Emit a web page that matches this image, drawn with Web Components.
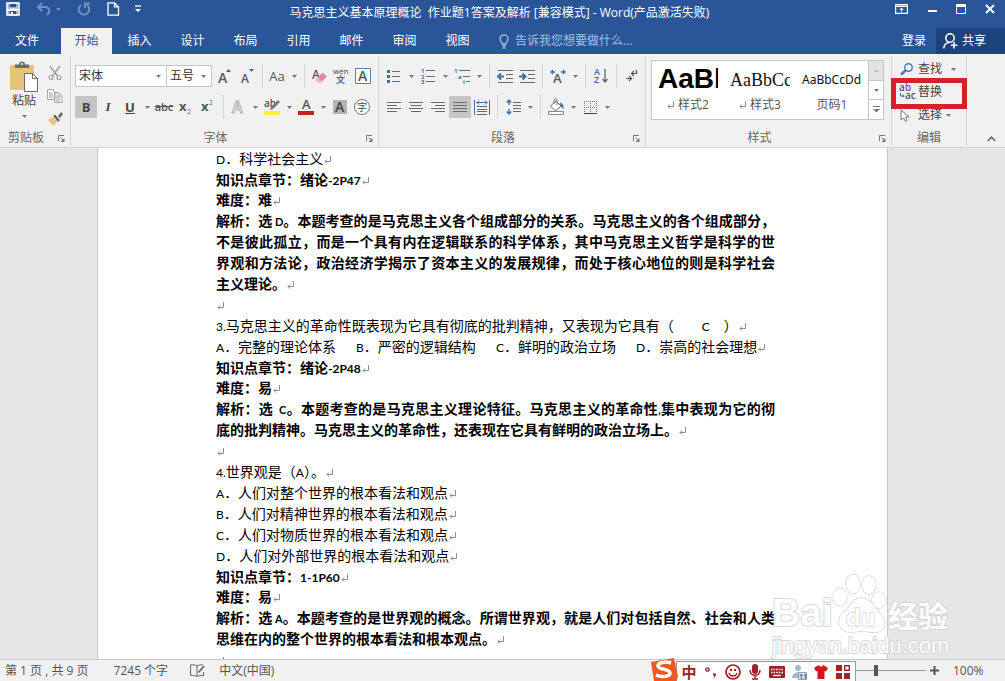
<!DOCTYPE html>
<html lang="zh-CN">
<head>
<meta charset="utf-8">
<title>马克思主义基本原理概论 作业题1答案及解析 - Word</title>
<style>
html, body { margin: 0; height: 100%; }
body { overflow: hidden; font: 12px/16px "Open Sans", "Noto Sans CJK SC", sans-serif; color: #444; }
</style>
</head>
<body>
<word-app></word-app>
<script>
const base = `*{box-sizing:border-box}
button,select,input{font:inherit;color:inherit;margin:0;padding:0;border:0;background:none}
a{color:inherit;text-decoration:none}`;
function define(name, css, html) {
  const tpl = document.createElement('template');
  tpl.innerHTML = `<style>${base}${css}</style>${html}`;
  customElements.define(name, class extends HTMLElement {
    connectedCallback() {
      if (!this.shadowRoot) this.attachShadow({ mode: 'open' }).append(tpl.content.cloneNode(true));
    }
  });
}

/* name: [width, height, svg body] */
const S = 'fill="none" stroke="currentColor"';
const lines = (rows) => rows.map(([x, y, w]) => `<path d="M${x} ${y}.5h${w}" stroke="#6a6a6a"/>`).join('');
const T = (x, y, s, size, extra = '') => `<text x="${x}" y="${y}" font-size="${size}" ${extra}>${s}</text>`;
const icons = {
  save: [14, 14, `<path d="M1 1h12v12H1z" ${S} stroke-width="1.6"/><path d="M3 1h8v5H3zM3 8h8v5H3z" fill="none" stroke="currentColor"/><path d="M1 6.500h12v2.500H1z" fill="currentColor"/><path d="M5 10h2v3H5z" fill="currentColor"/>`],
  undo: [16, 14, `<path d="M2 5h8a4 4 0 0 1 1 7.500" ${S} stroke-width="2"/><path d="M6 1L2 5l4 4" ${S} stroke-width="2"/>`],
  redo: [14, 14, `<path d="M4 3a5.300 5.300 0 1 0 6 0" ${S} stroke-width="2"/><path d="M8 6V1.500h5" ${S} stroke-width="2"/>`],
  page: [12, 14, `<path d="M1 .8h6.500l4 4V13.200H1zM7.500.8v4h4" ${S} stroke-width="1.300"/>`],
  more: [6, 8, `<path d="M0 1h6" ${S} stroke-width="1.300"/><path d="M0 4h6L3 7z" fill="currentColor"/>`],
  caret: [5, 3, `<path d="M0 0h5L2.500 3z" fill="currentColor"/>`],
  caretup: [5, 3, `<path d="M0 3h5L2.500 0z" fill="currentColor"/>`],
  expand: [7, 7, `<path d="M0 .5h7" ${S}/><path d="M0 3h7L3.500 6.500z" fill="currentColor"/>`],
  launch: [7, 7, `<path d="M.5 6V.5H6" ${S}/><path d="M2.500 2.500L6 6" ${S}/><path d="M6.500 3v4h-4z" fill="currentColor"/>`],
  collapse: [9, 6, `<path d="M.7 5L4.500 1.200 8.300 5" ${S} stroke-width="1.600"/>`],
  ribbonopt: [13, 10, `<path d="M.6.6h11.800v8.800H.6zM.6 2.400h11.800" ${S} stroke-width="1.200"/><path d="M6.500 8.500V4.200M4.600 6l1.900-2 1.900 2" ${S}/>`],
  min: [10, 10, `<path d="M1 7h9" ${S} stroke-width="2"/>`],
  max: [10, 10, `<path d="M.5.5h9v9h-9z" ${S}/><path d="M0 0h10v3H0z" fill="currentColor"/>`],
  close: [10, 10, `<path d="M1 1l8 8M9 1L1 9" ${S} stroke-width="2"/>`],
  bulb: [10, 15, `<path d="M3.300 10C3.300 8 1 7.500 1 4.800a4 4 0 0 1 8 0C9 7.500 6.700 8 6.700 10z" ${S} stroke-width="1.300"/><path d="M3.300 12h3.400M3.700 14h2.600" ${S} stroke-width="1.300"/>`],
  person: [15, 16, `<circle cx="7" cy="5" r="4.200" ${S} stroke-width="1.500"/><path d="M.8 15.500C1 12 3 9.700 6 9.400M11 9v6.500M7.800 12.300h6.500" ${S} stroke-width="1.500"/>`],
  paste: [28, 31, `<rect y="4" width="24" height="25" rx="1" fill="#e9c07c"/><path d="M5 7V3.500h4a3 3 0 0 1 6 0h4V7z" fill="#6b6b6b"/><circle cx="12" cy="3" r="1" fill="#fff"/><path d="M14.500 12.500h8l5 5v13h-13z" fill="#fff" stroke="#6b6b6b"/><path d="M22.500 12.500v5h5" fill="none" stroke="#6b6b6b"/>`],
  cut: [14, 14, `<path d="M2 0l7.500 10M12 0L4.500 10" stroke="#a0a0a0" fill="none" stroke-width="1.500"/><circle cx="3" cy="11.500" r="2" fill="none" stroke="#a0a0a0" stroke-width="1.200"/><circle cx="11" cy="11.500" r="2" fill="none" stroke="#a0a0a0" stroke-width="1.200"/>`],
  copy: [16, 14, `<path d="M.5.500h5l2.500 2.500v7.500H.5zM7.500 3.500h4l3.500 3v7H7.500z" fill="#f1f1f1" stroke="#a9a9a9"/><path d="M2 4h3M2 6h4M2 8h4M9 8h4M9 10h4M9 12h4M11 4v3h3" stroke="#a9a9a9" fill="none"/>`],
  brush: [15, 14, `<path d="M0 8l5-3 4 5-4 4C4 12 2 10 0 8z" fill="#e9c07c"/><path d="M5 4l2-1.500 5 5.500-2 2zM10 4l3-4 2 2-3 4z" fill="#6b6b6b"/>`],
  grow: [14, 15, T(0, 14, 'A', 14, 'font-weight="600" fill="#5a5a5a"') + `<path d="M8 3h5l-2.500-3z" fill="#44669c"/>`],
  shrink: [14, 15, T(1, 14, 'A', 12, 'font-weight="600" fill="#5a5a5a"') + `<path d="M9 0h5l-2.500 3z" fill="#44669c"/>`],
  erase: [15, 15, T(0, 10, 'A', 12, 'font-weight="600" fill="#5a5a5a"') + `<path d="M3 11L10.500 3.500 15 7.500 8 14.500z" fill="#e58a9d"/><path d="M3 11l2.500-2.500 4.500 4L8 14.500z" fill="#f3bcc6"/>`],
  phonetic: [16, 16, T(0, 6, 'wén', 8, 'fill="#444"') + T(3, 15, '文', 9, 'fill="#3f73a8" font-weight="700"')],
  abox: [16, 16, `<path d="M.5.5h15v15H.5z" fill="#fff" stroke="#5b82ab"/>` + T(3, 13, 'A', 14, 'font-weight="600" fill="#555"')],
  sub: [14, 14, T(0, 11, 'x', 13, 'font-weight="700" fill="#555"') + T(8, 14, '2', 7, 'fill="#3f73a8"')],
  sup: [14, 14, T(0, 11, 'x', 13, 'font-weight="700" fill="#555"') + T(8, 5, '2', 7, 'fill="#3f73a8"')],
  outline: [14, 15, T(1, 13, 'A', 16, 'font-weight="600" fill="#fff" stroke="#adadad"')],
  highlight: [16, 16, T(0, 8, 'ab', 10, 'font-weight="600" fill="#555"') + `<path d="M14 1l2 2-7 7-3 1 1-3z" fill="#777"/><path d="M0 12h16v4H0z" fill="#f7f330"/>`],
  color: [16, 16, T(4, 10, 'A', 13, 'font-weight="600" fill="#555"') + `<path d="M0 12h16v4H0z" fill="#c9211e"/>`],
  shade: [14, 14, `<path d="M0 0h14v14H0z" fill="#b3b3b3"/>` + T(2, 12, 'A', 14, 'font-weight="600" fill="#444"')],
  enclose: [16, 16, `<circle cx="8" cy="8" r="7.500" fill="#fff" stroke="#777"/>` + T(3, 12, '字', 10, 'fill="#444"')],
  bullets: [14, 15, `<path d="M0 1h3v3H0zM0 6h3v3H0zM0 11h3v3H0z" fill="#3f6fa5"/>` + lines([[5, 2, 8], [5, 7, 8], [5, 12, 8]])],
  numbers: [14, 16, ['1', '2', '3'].map((n, i) => T(0, 5 + 5.500 * i, n, 6, 'fill="#3f6fa5" font-weight="700"')).join('') + lines([[5, 2, 9], [5, 8, 9], [5, 13, 9]])],
  multi: [17, 16, T(0, 5, '1', 6, 'fill="#3f6fa5" font-weight="700"') + T(4, 11, 'a', 6, 'fill="#3f6fa5" font-weight="700"') + T(9, 16, 'i', 6, 'fill="#3f6fa5" font-weight="700"') + lines([[5, 2, 11], [9, 8, 7], [12, 13, 4]])],
  outdent: [16, 13, lines([[1, 0, 15], [9, 4, 7], [9, 8, 7], [1, 12, 15]]) + `<path d="M7 6.500H2M4 3.500l-3 3 3 3" fill="none" stroke="#3f6fa5" stroke-width="2"/>`],
  indent: [16, 13, lines([[1, 0, 15], [9, 4, 7], [9, 8, 7], [1, 12, 15]]) + `<path d="M0 6.500h5M3.500 3.500l3 3-3 3" fill="none" stroke="#3f6fa5" stroke-width="2"/>`],
  asian: [16, 14, T(3, 14, 'A', 13, 'font-weight="600" fill="#5a5a5a"') + `<path d="M5 3H1M3 1L1 3l2 2M11 3h4M13 1l2 2-2 2" fill="none" stroke="#3f6fa5" stroke-width="1.300"/>`],
  sort: [14, 16, T(0, 7, 'A', 9, 'font-weight="600" fill="#3f6fa5"') + T(0, 15, 'Z', 9, 'font-weight="600" fill="#8a4a9e"') + `<path d="M11 1v12M8.500 11l2.500 3 2.500-3" fill="none" stroke="#666" stroke-width="1.300"/>`],
  marks: [12, 12, `<path d="M10.500 0v3.500H6M8 1L5.500 3.500 8 6M0 8.500h5M3 6l2.500 2.500L3 11" fill="none" stroke="#555" stroke-width="1.200"/>`],
  left: [14, 12, lines([[0, 1, 14], [0, 4, 10], [0, 7, 14], [0, 10, 10]])],
  center: [14, 12, lines([[0, 1, 14], [2, 4, 10], [0, 7, 14], [2, 10, 10]])],
  right: [14, 12, lines([[0, 1, 14], [4, 4, 10], [0, 7, 14], [4, 10, 10]])],
  justify: [14, 12, lines([[0, 1, 14], [0, 4, 14], [0, 7, 14], [0, 10, 14]])],
  distribute: [16, 15, `<path d="M.5 0v15M15.500 0v15" stroke="#3f6fa5"/><path d="M2.500 2.500h11M5 .5l-2 2 2 2M11 .5l2 2-2 2" fill="none" stroke="#3f6fa5"/>` + lines([[3, 6, 10], [3, 9, 10], [3, 11, 10], [3, 14, 10]])],
  spacing: [15, 16, `<path d="M3 1v5M.8 3.500L3 1l2.200 2.500M3 15v-5M.8 12.500L3 15l2.200-2.500" fill="none" stroke="#3f6fa5" stroke-width="1.400"/>` + lines([[7, 3, 8], [7, 6, 8], [7, 9, 8], [7, 12, 8]])],
  bucket: [17, 16, `<path d="M2.500 7L8 2l5 5-5.500 5z" fill="#fff" stroke="#666"/><path d="M6 5V1.500a1.500 1.500 0 0 1 3 0V6" fill="none" stroke="#8a6a4a"/><path d="M12 3.500c3 1 4 3 3.500 7-1-1-1.500-2.500-3-3.500z" fill="#3f6fa5"/><path d="M.5 12.500h15v3H.5z" fill="#fff" stroke="#888"/>`],
  borders: [13, 13, `<path d="M.5 0v12M6.500 0v12M12.500 0v12M0 .5h13M0 6.500h13" stroke="#777" stroke-dasharray="1 1"/><path d="M0 12.500h13" stroke="#444"/>`],
  find: [13, 12, `<circle cx="8.500" cy="4.500" r="3.700" fill="#fff" stroke="#4679b2" stroke-width="1.500"/><path d="M5.500 7.500L1 11.500" stroke="#4679b2" stroke-width="2.400"/>`],
  replace: [17, 16, T(-1, 7, 'a', 10, 'fill="#555" font-weight="600"') + T(5, 7, 'b', 10, 'fill="#8a4a9e" font-weight="600"') + T(5, 15, 'ac', 10, 'fill="#555" font-weight="600"') + `<path d="M.5 9v3h4M2.500 10.500L4 12l-1.500 1.500" fill="none" stroke="#3f6fa5"/>`],
  select: [10, 13, `<path d="M1 1v10l2.500-2 2 3.500 1.500-1L5.500 8H9z" fill="#fff" stroke="#777"/>`],
  proof: [15, 13, `<path d="M7 12.500V2C5.500.8 3 .7.600.8v10.500c2.400 0 4.900.2 6.400 1.200zM7 2C8 1 10 .8 13 .8M7 12.500c1-.8 3-1 6.500-1V8" fill="none" stroke="#666"/><path d="M8.500 8.500L14 2" stroke="#666" stroke-width="1.800"/>`],
  enter: [7, 8, `<path d="M6.500 0v5.500H1M3 3.500L1 5.500l2 2" fill="none" stroke="#8c8c8c"/>`],
  plus: [9, 9, `<path d="M0 4.500h9M4.500 0v9" stroke="#555" stroke-width="2"/>`],
  sogou: [28, 23, `<path d="M1 4l23-4 4 19-2 4H4z" fill="#ec5a24"/><path d="M21 5C15 3 8 4.500 8 8c0 4 12 2.500 12 7 0 4-9 4.500-14 2" fill="none" stroke="#fff" stroke-width="3.600"/>`],
  smile: [16, 16, `<circle cx="8" cy="8" r="7" fill="none" stroke="#a32024" stroke-width="1.700"/><path d="M4 9c1 4 7 4 8 0" fill="none" stroke="#a32024" stroke-width="1.300"/><path d="M5 5h2v2H5zM9 5h2v2H9z" fill="#a32024"/>`],
  comma: [12, 12, `<circle cx="2.500" cy="3.500" r="1.700" fill="none" stroke="#a32024" stroke-width="1.300"/><path d="M8 7.500a1.700 1.700 0 1 1 2.500 2.500L8 13c1-1.500 1.300-2.500.8-3z" fill="#a32024"/>`],
  mic: [12, 16, `<rect x="3" width="6" height="10" rx="3" fill="#a32024"/><path d="M1 6c0 7 10 7 10 0M6 11v4M3 15h6" fill="none" stroke="#a32024" stroke-width="1.500"/>`],
  keys: [16, 12, `<rect width="16" height="12" rx="1" fill="#a32024"/><path d="M2 3.500h12M2 6.500h12" stroke="#fff" stroke-width="1.500" stroke-dasharray="1.500 1.100"/><path d="M4 9.500h8" stroke="#fff" stroke-width="1.300"/>`],
  user: [16, 16, `<circle cx="7" cy="4" r="3" fill="#a9b8cd"/><path d="M1 14c0-7 10-7 12-3v3z" fill="#a9b8cd"/><path d="M7.500 8.500h8v7h-8z" fill="#dde6f2" stroke="#8ca0bf"/>` + T(8, 15, '11', 7, 'fill="#52698f"')],
  shirt: [14, 14, `<path d="M0 3l4.500-3c1 2 4 2 5 0L14 3l-2 3.500-1.500-.5v8h-7V6L2 6.500z" fill="#d4151b"/>`],
  grid: [14, 14, `<path d="M0 0h6v6H0zM0 8h6v6H0zM8 8h6v6H8z" fill="#a32024"/><path d="M8.700.7h4.600v4.600H8.700z" fill="none" stroke="#a32024" stroke-width="1.400"/>`],
};
customElements.define('ui-icon', class extends HTMLElement {
  connectedCallback() {
    if (this.shadowRoot) return;
    const [w, h, body] = icons[this.getAttribute('name')];
    this.attachShadow({ mode: 'open' }).innerHTML =
      `<style>:host{display:inline-flex;flex:none}svg{display:block;overflow:visible;font-family:"Open Sans","Noto Sans CJK SC",sans-serif}</style>
       <svg width="${w}" height="${h}" viewBox="0 0 ${w} ${h}" aria-hidden="true">${body}</svg>`;
  }
});

/* Ribbon button: optional icon, optional slotted glyph, optional drop-down caret */
customElements.define('tool-button', class extends HTMLElement {
  connectedCallback() {
    if (this.shadowRoot) return;
    const icon = this.getAttribute('icon');
    this.attachShadow({ mode: 'open' }).innerHTML = `<style>${base}
      :host{display:flex;flex:none;height:22px}
      button{display:flex;align-items:center;height:22px}
      .face{width:22px;display:flex;justify-content:center;white-space:nowrap}
      .drop{width:12px;display:flex;justify-content:center;color:#777}
      :host([pressed]) button{background:#c5c5c5}
      :host([pressed]) .face{height:22px;align-items:center}
    </style><button type="button" aria-label="${this.getAttribute('label')}"><span class="face">${icon ? `<ui-icon name="${icon}"></ui-icon>` : '<slot></slot>'}</span>${this.hasAttribute('drop') ? '<span class="drop"><ui-icon name="caret"></ui-icon></span>' : ''}</button>`;
  }
});

define('tool-sep', `:host{display:block;flex:none;width:var(--sep,8px);height:24px}
  i{display:block;width:1px;height:24px;margin:0 auto;background:#d6d6d6}`, `<i></i>`);

customElements.define('ribbon-group', class extends HTMLElement {
  connectedCallback() {
    if (this.shadowRoot) return;
    this.attachShadow({ mode: 'open' }).innerHTML = `<style>${base}
      :host{display:flex;flex-direction:column;border-right:1px solid #d6d6d6;height:90px}
      .body{flex:1;min-height:0}
      footer{display:flex;align-items:center;height:16px;color:#666}
      footer span{flex:1;text-align:center}
      footer button{width:18px;height:16px;display:flex;align-items:center;justify-content:center;color:#777}
    </style><div class="body"><slot></slot></div>
    <footer><span>${this.getAttribute('label')}</span>${this.hasAttribute('launcher') ? '<button type="button" aria-label="更多选项"><ui-icon name="launch"></ui-icon></button>' : ''}</footer>`;
  }
});

define('title-bar', `:host{display:grid;grid-template-columns:1fr auto 1fr;height:28px;color:#fff}
  .quick{display:flex;align-items:flex-start;gap:16px;padding:2px 6px}
  .quick button{display:flex;align-items:center;gap:4px;height:14px}
  .dim{opacity:.35}
  h1{margin:0;font-size:12px;line-height:26px;font-weight:400;white-space:pre;padding-right:6px}
  .win{display:flex;justify-content:flex-end;gap:19px;padding:4px 10px}
  .win button{display:flex;height:10px}`,
`<div class="quick"><button aria-label="保存"><ui-icon name="save"></ui-icon></button>
<button class="dim" aria-label="撤消"><ui-icon name="undo"></ui-icon><ui-icon name="caret"></ui-icon></button>
<button class="dim" aria-label="重复"><ui-icon name="redo"></ui-icon></button>
<button aria-label="新建"><ui-icon name="page"></ui-icon></button>
<button aria-label="自定义快速访问工具栏"><ui-icon name="more"></ui-icon></button></div>
<h1>马克思主义基本原理概论  作业题1答案及解析 [兼容模式] - Word(产品激活失败)</h1>
<div class="win"><button aria-label="功能区显示选项"><ui-icon name="ribbonopt"></ui-icon></button><button aria-label="最小化"><ui-icon name="min"></ui-icon></button><button aria-label="最大化"><ui-icon name="max"></ui-icon></button><button aria-label="关闭"><ui-icon name="close"></ui-icon></button></div>`);

define('ribbon-tabs', `:host{display:flex;height:26px;color:#fff;line-height:24px;padding-left:1px}
  nav{display:flex}
  a{width:53px;text-align:center;padding-top:1px}
  .file{width:52px;margin-right:8px}
  .on{background:#f1f1f1;color:#2b579a;width:51px;margin-right:1px;margin-left:0}
  .tell{display:flex;align-items:center;gap:6px;margin-left:15px;color:#a9c0e2}
  input{width:130px;height:24px}
  input::placeholder{color:#a9c0e2;opacity:1}
  .sign{width:auto;margin-left:auto;margin-right:10px}
  .share{display:flex;align-items:center;gap:4px;width:69px;padding-left:7px;background:#1c437c}`,
`<nav><a class="file" href="#">文件</a><a class="on" href="#">开始</a><a href="#">插入</a><a href="#">设计</a><a href="#">布局</a><a href="#">引用</a><a href="#">邮件</a><a href="#">审阅</a><a href="#">视图</a></nav>
<label class="tell"><ui-icon name="bulb"></ui-icon><input type="text" aria-label="告诉我您想要做什么" placeholder="告诉我您想要做什么..."></label>
<a class="sign" href="#">登录</a><button class="share"><ui-icon name="person"></ui-icon>共享</button>`);

define('clipboard-tools', `:host{display:flex;padding-top:5px}
  .paste{display:flex;flex-direction:column;align-items:center;width:46px;height:60px;line-height:18px;padding-left:2px}
  .paste ui-icon:last-child{margin-top:5px;color:#777}
  .side{display:flex;flex-direction:column}
  .side button{width:18px;height:23px;display:flex;align-items:center;justify-content:center}`,
`<button class="paste"><ui-icon name="paste"></ui-icon>粘贴<ui-icon name="caret"></ui-icon></button>
<div class="side"><button aria-label="剪切"><ui-icon name="cut"></ui-icon></button><button aria-label="复制"><ui-icon name="copy"></ui-icon></button><button aria-label="格式刷"><ui-icon name="brush"></ui-icon></button></div>`);

define('font-tools', `:host{display:flex;flex-direction:column;gap:9px;padding:9px 0 0 4px}
  .row{display:flex;align-items:center;height:22px}
  label{display:flex;position:relative;height:22px;background:#fff;border:1px solid #c6c6c6}
  label ui-icon{position:absolute;right:5px;top:9px;color:#777;pointer-events:none}
  select{appearance:none;width:100%;padding:0 3px;color:#333}
  .name{width:92px;margin-right:-1px}.size{width:46px;margin-right:2px}
  b,i,u{font-size:13px;line-height:20px}
  u,b{font-weight:700}i{font-family:"Liberation Serif",serif;font-weight:700}
  s{font-size:11px;font-weight:600;color:#555}.aa{color:#555;font-size:13px}`,
`<div class="row"><label class="name"><select aria-label="字体"><option>宋体</option></select><ui-icon name="caret"></ui-icon></label>
<label class="size"><select aria-label="字号"><option>五号</option></select><ui-icon name="caret"></ui-icon></label>
<tool-button icon="grow" label="增大字号"></tool-button><tool-button icon="shrink" label="减小字号"></tool-button><tool-sep></tool-sep>
<tool-button drop label="更改大小写"><span class="aa">Aa</span></tool-button><tool-sep></tool-sep>
<tool-button icon="erase" label="清除格式"></tool-button><tool-button icon="phonetic" label="拼音指南"></tool-button><tool-button icon="abox" label="字符边框"></tool-button></div>
<div class="row"><tool-button pressed label="加粗"><b>B</b></tool-button><tool-button label="倾斜"><i>I</i></tool-button><tool-button drop label="下划线"><u>U</u></tool-button><tool-button label="删除线"><s>abc</s></tool-button><tool-button icon="sub" label="下标"></tool-button><tool-button icon="sup" label="上标"></tool-button><tool-sep></tool-sep>
<tool-button drop icon="outline" label="文本效果"></tool-button><tool-button drop icon="highlight" label="突出显示"></tool-button><tool-button drop icon="color" label="字体颜色"></tool-button><tool-button icon="shade" label="字符底纹"></tool-button><tool-button icon="enclose" label="带圈字符"></tool-button></div>`);

define('paragraph-tools', `:host{display:flex;flex-direction:column;gap:9px;padding:9px 0 0 4px;--sep:9px}
  .row{display:flex;align-items:center;height:22px}`,
`<div class="row"><tool-button drop icon="bullets" label="项目符号"></tool-button><tool-button drop icon="numbers" label="编号"></tool-button><tool-button drop icon="multi" label="多级列表"></tool-button><tool-sep></tool-sep><tool-button icon="outdent" label="减少缩进量"></tool-button><tool-button icon="indent" label="增加缩进量"></tool-button><tool-sep></tool-sep><tool-button drop icon="asian" label="中文版式"></tool-button><tool-sep></tool-sep><tool-button icon="sort" label="排序"></tool-button><tool-sep></tool-sep><tool-button icon="marks" label="显示编辑标记"></tool-button></div>
<div class="row"><tool-button icon="left" label="左对齐"></tool-button><tool-button icon="center" label="居中"></tool-button><tool-button icon="right" label="右对齐"></tool-button><tool-button pressed icon="justify" label="两端对齐"></tool-button><tool-button icon="distribute" label="分散对齐"></tool-button><tool-sep></tool-sep><tool-button drop icon="spacing" label="行距"></tool-button><tool-sep></tool-sep><tool-button drop icon="bucket" label="底纹"></tool-button><tool-button drop icon="borders" label="边框"></tool-button></div>`);

define('style-gallery', `:host{display:flex;margin:4px 7px 0 5px;height:60px;background:#fff;border:1px solid #c6c6c6}
  .items{display:flex;flex:1;min-width:0}
  .item{flex:1;min-width:0;padding:0 6px;display:flex;flex-direction:column;align-items:stretch;color:#555}
  .item span{display:block;height:36px;line-height:38px;overflow:hidden;white-space:nowrap;color:#111;text-align:left}
  .item div{display:flex;align-items:center;justify-content:center;gap:4px;line-height:16px}
  .two span{font:700 28px/36px "Liberation Sans",sans-serif;color:#000}
  .three span{font:18px/38px "Liberation Serif",serif}
  .code span{font-family:"Noto Sans",sans-serif}
  .scroll{width:15px;display:flex;flex-direction:column;border-left:1px solid #c6c6c6;color:#777}
  .scroll button{flex:1;display:flex;align-items:center;justify-content:center}
  .scroll button+button{border-top:1px solid #c6c6c6}
  .scroll .off{background:#e3e3e3;color:#bbb}`,
`<div class="items"><button class="item two"><span>AaBb</span><div><ui-icon name="enter"></ui-icon>样式2</div></button>
<button class="item three"><span>AaBbCc</span><div><ui-icon name="enter"></ui-icon>样式3</div></button>
<button class="item code"><span>AaBbCcDd</span><div>页码1</div></button></div>
<div class="scroll"><button class="off" aria-label="上一行"><ui-icon name="caretup"></ui-icon></button><button aria-label="下一行"><ui-icon name="caret"></ui-icon></button><button aria-label="其他"><ui-icon name="expand"></ui-icon></button></div>`);

define('edit-tools', `:host{display:flex;flex-direction:column;gap:1px;padding-top:2px;position:relative}
  button{display:flex;align-items:center;height:22px;padding-left:7px}
  .pic{width:19px;display:flex;padding-left:1px}
  .drop{margin-left:9px;color:#777}.near{margin-left:4px}
  .mark{position:absolute;inset:22px 0 auto 0;height:31px;margin:0 -1px;border:5px solid #d8202a;pointer-events:none}`,
`<button><span class="pic"><ui-icon name="find"></ui-icon></span>查找<ui-icon class="drop" name="caret"></ui-icon></button>
<button><span class="pic"><ui-icon name="replace"></ui-icon></span>替换</button>
<button><span class="pic"><ui-icon name="select"></ui-icon></span>选择<ui-icon class="drop near" name="caret"></ui-icon></button>
<div class="mark"></div>`);

define('ribbon-bar', `:host{display:flex;height:94px;background:#f1f1f1;border-bottom:1px solid #d2d2d2;padding-top:2px}
  .clip{width:71px}.font{width:308px}.para{width:267px}.styles{flex:1;min-width:180px}.edit{width:75px}
  .tail{width:38px;display:flex;align-items:flex-end;justify-content:center;padding:0 0 5px 10px;color:#666}`,
`<ribbon-group class="clip" label="剪贴板" launcher><clipboard-tools></clipboard-tools></ribbon-group>
<ribbon-group class="font" label="字体" launcher><font-tools></font-tools></ribbon-group>
<ribbon-group class="para" label="段落" launcher><paragraph-tools></paragraph-tools></ribbon-group>
<ribbon-group class="styles" label="样式" launcher><style-gallery></style-gallery></ribbon-group>
<ribbon-group class="edit" label="编辑"><edit-tools></edit-tools></ribbon-group>
<button class="tail" aria-label="折叠功能区"><ui-icon name="collapse"></ui-icon></button>`);

/* One paragraph of the document with its end-of-paragraph mark */
define('doc-p', `:host{display:block;line-height:21px;text-align:justify}
  :host([strong]){font-weight:700}
  :host([chapter]){font-weight:700;line-height:20px}
  ui-icon{margin-left:1px}`,
`<slot></slot><ui-icon name="enter"></ui-icon>`);

define('word-document', `:host{display:block;flex:1;min-height:0;overflow:hidden;background:#e6e6e6;padding-right:20px}
  article{width:791px;max-width:100%;margin:0 auto;height:100%;overflow:hidden;background:#fff;border:solid #c8c8c8;border-width:0 1px;padding:0 112px 0 118px;font:14px/21px "Noto Sans CJK SC",sans-serif;color:#000}
  b{font-family:Lato,sans-serif;font-size:12px;font-weight:inherit;line-height:14px}
  doc-p[strong] b{font-size:11px}
  .opt{display:inline-block;width:140px}
  .opt:last-of-type{width:auto}`,
`<article>
<doc-p><b>D</b>．科学社会主义</doc-p>
<doc-p chapter>知识点章节：绪论<b>-2P47</b></doc-p>
<doc-p strong>难度：难</doc-p>
<doc-p strong>解析：选<b> D</b>。本题考查的是马克思主义各个组成部分的关系。马克思主义的各个组成部分，不是彼此孤立，而是一个具有内在逻辑联系的科学体系，其中马克思主义哲学是科学的世界观和方法论，政治经济学揭示了资本主义的发展规律，而处于核心地位的则是科学社会主义理论。</doc-p>
<doc-p></doc-p>
<doc-p><b>3.</b>马克思主义的革命性既表现为它具有彻底的批判精神，又表现为它具有（&emsp;&emsp;<b>C</b>&emsp;）</doc-p>
<doc-p><span class="opt"><b>A</b>．完整的理论体系</span><span class="opt"><b>B</b>．严密的逻辑结构</span><span class="opt"><b>C</b>．鲜明的政治立场</span><span class="opt"><b>D</b>．崇高的社会理想</span></doc-p>
<doc-p chapter>知识点章节：绪论<b>-2P48</b></doc-p>
<doc-p strong>难度：易</doc-p>
<doc-p strong>解析：选<b>&nbsp; C</b>。本题考查的是马克思主义理论特征。马克思主义的革命性<b>,</b>集中表现为它的彻底的批判精神。马克思主义的革命性，还表现在它具有鲜明的政治立场上。</doc-p>
<doc-p></doc-p>
<doc-p><b>4.</b>世界观是（<b>A</b>）。</doc-p>
<doc-p><b>A</b>．人们对整个世界的根本看法和观点</doc-p>
<doc-p><b>B</b>．人们对精神世界的根本看法和观点</doc-p>
<doc-p><b>C</b>．人们对物质世界的根本看法和观点</doc-p>
<doc-p><b>D</b>．人们对外部世界的根本看法和观点</doc-p>
<doc-p chapter>知识点章节：<b>1-1P60</b></doc-p>
<doc-p strong>难度：易</doc-p>
<doc-p strong>解析：选<b> A</b>。本题考查的是世界观的概念。所谓世界观，就是人们对包括自然、社会和人类思维在内的整个世界的根本看法和根本观点。</doc-p>
<doc-p></doc-p>
</article>`);

define('status-bar', `:host{display:flex;align-items:center;height:22px;flex:none;background:#f1f1f1;border-top:1px solid #c8c8c8;padding:0 20px 0 5px;color:#555;white-space:pre}
  .words{margin-left:25px}.proof{margin:0 14px 0 22px;display:flex}
  .zoom{display:flex;align-items:center;margin-left:auto}
  input{appearance:none;width:100px;height:14px;background:linear-gradient(#999,#999) center/100% 1px no-repeat}
  input::-webkit-slider-thumb{appearance:none;width:4px;height:11px;background:#555}
  .zoom button{display:flex;margin:0 14px 0 4px}
  output{min-width:32px}`,
`<span>第 1 页 , 共 9 页</span><span class="words">7245 个字</span><button class="proof" aria-label="校对"><ui-icon name="proof"></ui-icon></button><span>中文(中国)</span>
<div class="zoom"><input type="range" min="0" max="100" value="50" aria-label="显示比例"><button aria-label="放大"><ui-icon name="plus"></ui-icon></button><output>100%</output></div>`);

define('ime-bar', `:host{position:absolute;right:149px;bottom:0;display:flex;align-items:flex-end}
  .logo{margin-right:-2px;position:relative}
  .keys{display:flex;height:20px;background:#fff;border:1px solid #999;border-bottom:0;padding:0 1px}
  .keys button{width:22px;display:flex;align-items:center;justify-content:center;color:#a32024;font-weight:700;font-size:15px}`,
`<ui-icon class="logo" name="sogou"></ui-icon><div class="keys"><button>中</button><button aria-label="标点"><ui-icon name="comma"></ui-icon></button><button aria-label="表情"><ui-icon name="smile"></ui-icon></button><button aria-label="语音"><ui-icon name="mic"></ui-icon></button><button aria-label="软键盘"><ui-icon name="keys"></ui-icon></button><button aria-label="账户"><ui-icon name="user"></ui-icon></button><button aria-label="皮肤"><ui-icon name="shirt"></ui-icon></button><button aria-label="工具箱"><ui-icon name="grid"></ui-icon></button></div>`);

define('site-mark', `:host{position:absolute;right:55px;bottom:22px;width:178px;pointer-events:none;color:#fff;
    -webkit-text-stroke:2px #d6d6d6;paint-order:stroke fill;opacity:.9}
  .top{display:flex;align-items:flex-end;height:60px}
  .bai{font:700 39px/40px "Liberation Sans",sans-serif;width:62px}
  .paw{width:54px;height:60px;overflow:visible;flex:none}
  .jy{font:700 30px/38px "Noto Sans CJK SC",sans-serif}
  .url{font:22px/26px "Liberation Sans",sans-serif}`,
`<div class="top"><span class="bai">Bai</span>
<svg class="paw" viewBox="0 0 54 60" fill="#fff" stroke="#d4d4d4" stroke-width="1.500"><ellipse cx="19" cy="11" rx="7" ry="9.500"/><ellipse cx="35" cy="12" rx="7" ry="9"/><ellipse cx="6" cy="24" rx="7" ry="9"/><ellipse cx="45" cy="27" rx="7" ry="8"/><path d="M27 25c-9 0-10 9-17 14-8 6-6 19 5 20 7 0 9-1 14-1s8 2 14 1c9-1 10-12 3-19-7-6-9-15-19-15z"/><text x="12" y="53" font-family="Liberation Sans, sans-serif" font-size="24" font-weight="700" style="-webkit-text-stroke:0;stroke-width:1.500">du</text></svg>
<span class="jy">经验</span></div><div class="url">jingyan.baidu.com</div>`);

define('word-app', `:host{display:flex;flex-direction:column;height:100vh;position:relative;overflow:hidden}
  header{background:#2a5699;flex:none}
  ribbon-bar{flex:none}`,
`<header><title-bar></title-bar><ribbon-tabs></ribbon-tabs></header><ribbon-bar></ribbon-bar>
<word-document></word-document><status-bar></status-bar><site-mark></site-mark><ime-bar></ime-bar>`);
</script>
</body>
</html>
